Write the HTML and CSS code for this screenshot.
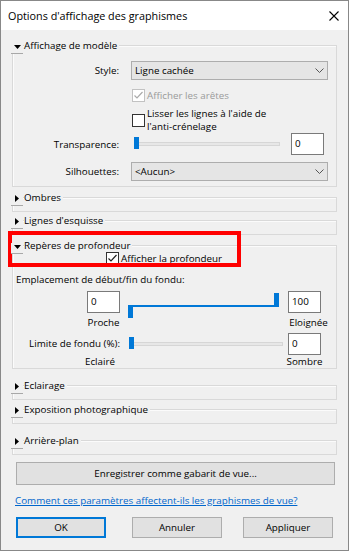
FILE: index.html
```html
<!DOCTYPE html>
<html lang="fr">
<head>
<meta charset="utf-8">
<title>Options d'affichage des graphismes</title>
<link rel="stylesheet" href="styles.css">
</head>
<body>
<div class="window">
  <div class="titlebar">
    <span class="title">Options d'affichage des graphismes</span>
    <svg class="close" width="10" height="10" viewBox="0 0 10 10"><path d="M0.5 0.5L9.5 9.5M9.5 0.5L0.5 9.5" stroke="#000" stroke-width="1.1" fill="none"/></svg>
  </div>
  <div class="content">
    <section class="group g1">
      <div class="head"><span class="tog down"><svg width="7" height="4" viewBox="0 0 7 4"><polygon points="0,0 7,0 3.5,4" fill="#000"/></svg></span><span class="gl">Affichage de modèle</span></div>
      <div class="frame model">
        <div class="mrow r1"><span class="lbl">Style:</span><div class="ctl select"><span>Ligne cachée</span><svg width="9" height="5" viewBox="0 0 9 5"><path d="M0.5 0.5L4.5 4.5L8.5 0.5" stroke="#555" fill="none"/></svg></div></div>
        <div class="mrow r2"><span class="lbl"></span><div class="ctl"><span class="chk disabled"><span class="box"><svg width="11" height="11" viewBox="0 0 11 11"><path d="M1.5 5.5L4 8L9.5 2" stroke="#aaa" stroke-width="1.2" fill="none"/></svg></span>Afficher les arêtes</span></div></div>
        <div class="mrow r3"><span class="lbl"></span><div class="ctl"><span class="chk"><span class="box"></span><span class="two">Lisser les lignes à l'aide de<br>l'anti-crénelage</span></span></div></div>
        <div class="mrow r4"><span class="lbl">Transparence:</span><div class="ctl tr"><svg class="slider" width="152" height="22" viewBox="0 0 152 22"><rect x="5.5" y="9.5" width="143" height="3" fill="#e7e7e7" stroke="#d6d6d6"/><rect x="3" y="4" width="5" height="12" fill="#0078d7"/></svg><span class="num">0</span></div></div>
        <div class="mrow r5"><span class="lbl">Silhouettes:</span><div class="ctl select"><span>&lt;Aucun&gt;</span><svg width="9" height="5" viewBox="0 0 9 5"><path d="M0.5 0.5L4.5 4.5L8.5 0.5" stroke="#555" fill="none"/></svg></div></div>
      </div>
    </section>

    <section class="group g2">
      <div class="head"><span class="tog right"><svg width="4" height="7" viewBox="0 0 4 7"><polygon points="0,0 4,3.5 0,7" fill="#000"/></svg></span><span class="gl">Ombres</span></div>
      <div class="frame empty"></div>
    </section>

    <section class="group g3">
      <div class="head"><span class="tog right"><svg width="4" height="7" viewBox="0 0 4 7"><polygon points="0,0 4,3.5 0,7" fill="#000"/></svg></span><span class="gl">Lignes d'esquisse</span></div>
      <div class="frame empty"></div>
    </section>

    <section class="group g4">
      <div class="head"><span class="tog down"><svg width="7" height="4" viewBox="0 0 7 4"><polygon points="0,0 7,0 3.5,4" fill="#000"/></svg></span><span class="gl">Repères de profondeur</span></div>
      <div class="frame depthframe">
        <div class="chkrow"><span class="chk"><span class="box"><svg width="11" height="11" viewBox="0 0 11 11"><path d="M1.5 5.5L4 8L9.5 2" stroke="#222" stroke-width="1.2" fill="none"/></svg></span>Afficher la profondeur</span></div>
        <div class="emp">Emplacement de début/fin du fondu:</div>
        <div class="depth">
          <span class="num c2 d1">0</span>
          <svg class="slider c3 d1" width="152" height="22" viewBox="0 0 152 22"><rect x="3" y="14" width="145" height="2" fill="#0078d7"/><rect x="0" y="14" width="5" height="13" fill="#0078d7"/><rect x="146" y="2" width="5" height="14" fill="#0078d7"/></svg>
          <span class="num c4 d1">100</span>
          <span class="cap c2 d2">Proche</span>
          <span class="cap c4 d2 shift">Eloignée</span>
          <span class="limlbl d3">Limite de fondu (%):</span>
          <svg class="slider c3 d3" width="152" height="22" viewBox="0 0 152 22"><rect x="3.5" y="9.5" width="151" height="3" fill="#e7e7e7" stroke="#d6d6d6"/><rect x="1" y="4" width="5" height="12" fill="#0078d7"/></svg>
          <span class="num c4 d3">0</span>
          <span class="cap small c2 d4 lshift">Eclairé</span>
          <span class="cap small c4 d4">Sombre</span>
        </div>
      </div>
    </section>

    <section class="group g5">
      <div class="head"><span class="tog right"><svg width="4" height="7" viewBox="0 0 4 7"><polygon points="0,0 4,3.5 0,7" fill="#000"/></svg></span><span class="gl">Eclairage</span></div>
      <div class="frame empty"></div>
    </section>

    <section class="group g6">
      <div class="head"><span class="tog right"><svg width="4" height="7" viewBox="0 0 4 7"><polygon points="0,0 4,3.5 0,7" fill="#000"/></svg></span><span class="gl">Exposition photographique</span></div>
      <div class="frame empty"></div>
    </section>

    <section class="group g7">
      <div class="head"><span class="tog right"><svg width="4" height="7" viewBox="0 0 4 7"><polygon points="0,0 4,3.5 0,7" fill="#000"/></svg></span><span class="gl">Arrière-plan</span></div>
      <div class="frame empty"></div>
    </section>

    <div class="btn save">Enregistrer comme gabarit de vue...</div>
    <a class="link" href="#">Comment ces paramètres affectent-ils les graphismes de vue?</a>
    <div class="buttons">
      <div class="btn ok">OK</div>
      <div class="btn cancel">Annuler</div>
      <div class="btn apply">Appliquer</div>
    </div>
  </div>
  <div class="annot"></div>
</div>
</body>
</html>
```

FILE: styles.css
```css
html, body {
  margin: 0;
  padding: 0;
  background: #fff;
}
body {
  font-family: "Open Sans", "Noto Sans", sans-serif;
  font-size: 9.8px;
  color: #000;
}
.window {
  position: relative;
  width: 349px;
  height: 551px;
  box-sizing: border-box;
  border: 1px solid #888;
  display: flex;
  flex-direction: column;
  background: #f0f0f0;
}
.titlebar {
  flex: none;
  height: 29px;
  background: #fff;
  display: flex;
  align-items: center;
  justify-content: space-between;
  padding: 0 9px 0 7px;
  font-size: 10.8px;
}
.close { display: block; }
.content {
  flex: 1;
  padding: 0 11px;
  display: flex;
  flex-direction: column;
}
.head {
  position: relative;
  z-index: 1;
  height: 16px;
  display: flex;
  align-items: center;
}
.tog {
  flex: none;
  width: 12px;
  height: 10px;
  margin-left: -1px;
  align-self: flex-end;
  margin-bottom: -1px;
  border-bottom: 1px solid #a8a8a8;
  background: #f0f0f0;
  display: flex;
  justify-content: center;
}
.tog svg { display: block; }
.tog.down { padding-top: 2px; height: 8px; }
.tog.right { padding-top: 0; }
.gl {
  margin-left: 1px;
  margin-top: 1px;
  padding-right: 2px;
  line-height: 12px;
  background: #f0f0f0;
  white-space: nowrap;
}
.frame {
  margin-top: -8px;
  border: 1px solid #d9d9d9;
  box-shadow: inset 1px 1px 0 #fbfbfb;
}
.frame.empty {
  height: 15px;
  box-sizing: border-box;
}
.g1 { margin-top: 7px; }
.g2 { margin-top: 2px; }
.g3 { margin-top: 0; }
.g4 { margin-top: 2px; }
.g5 { margin-top: 8px; }
.g6 { margin-top: 1px; }
.g7 { margin-top: 8px; }

/* model display group */
.model {
  padding: 15px 8px 5px 0;
  display: flex;
  flex-direction: column;
}
.mrow {
  display: flex;
  align-items: center;
  gap: 12px;
}
.mrow .lbl {
  flex: none;
  width: 106px;
  text-align: right;
  white-space: nowrap;
}
.mrow .ctl { flex: 1; min-width: 0; }
.r1, .r5 { height: 19px; }
.r2 { margin-top: 9px; height: 13px; }
.r3 { margin-top: 5px; height: 26px; }
.r4 { height: 22px; }
.r5 { margin-top: 7px; }
.select {
  height: 19px;
  box-sizing: border-box;
  border: 1px solid #adadad;
  background: #e5e5e5;
  display: flex;
  align-items: center;
  justify-content: space-between;
  padding: 0 3px 0 3px;
  white-space: nowrap;
}
.select svg { display: block; }
.chk {
  display: flex;
  align-items: center;
  margin-left: 1px;
  white-space: nowrap;
  line-height: 13px;
}
.box {
  flex: none;
  width: 13px;
  height: 13px;
  box-sizing: border-box;
  border: 1px solid #333;
  background: #fff;
  margin-right: 2px;
}
.box svg { display: block; }
.chk.disabled { color: #9a9a9a; }
.chk.disabled .box { border-color: #c2c2c2; }
.two { line-height: 13px; }
.tr {
  display: flex;
  align-items: center;
}
.slider { display: block; flex: none; overflow: visible; }
.num {
  flex: none;
  box-sizing: border-box;
  width: 33px;
  height: 22px;
  border: 1px solid #7a7a7a;
  background: #fff;
  padding-left: 3px;
  line-height: 20px;
}
.tr .num { margin-left: 8px; }

/* depth group */
.depthframe { padding-top: 6px; }
.chkrow { margin-left: 92px; height: 13px; display: flex; }
.emp {
  margin: 8px 0 0 3px;
  line-height: 14px;
  white-space: nowrap;
}
.depth {
  margin-top: 4px;
  display: grid;
  justify-content: start;
  grid-template-columns: 66px 33px 152px 33px;
  grid-template-rows: 22px 17px 25px 13px;
  column-gap: 8px;
}
.c2 { grid-column: 2; }
.c3 { grid-column: 3; }
.c4 { grid-column: 4; }
.d1 { grid-row: 1; }
.d2 { grid-row: 2; }
.d3 { grid-row: 3; align-self: end; }
.d4 { grid-row: 4; }
.cap {
  align-self: end;
  justify-self: center;
  white-space: nowrap;
  line-height: 14px;
}
.cap.small { line-height: 12px; }
.cap.shift { margin-left: 8px; }
.cap.lshift { margin-right: 7px; }
.limlbl {
  grid-column: 1 / 3;
  text-align: right;
  line-height: 22px;
  white-space: nowrap;
}

/* bottom */
.btn {
  box-sizing: border-box;
  border: 1px solid #adadad;
  background: #e1e1e1;
  text-align: center;
  white-space: nowrap;
}
.save {
  margin: 7px 2px 0 4px;
  height: 23px;
  line-height: 21px;
}
.link {
  margin: 9px 0 0 3px;
  line-height: 14px;
  color: #0066cc;
  text-decoration: underline;
  white-space: nowrap;
}
.buttons {
  margin-top: 9px;
  padding-left: 4px;
  display: flex;
}
.buttons .btn {
  width: 90px;
  height: 21px;
  line-height: 19px;
}
.ok {
  border-color: #0078d7;
  box-shadow: inset 0 0 0 1px #0078d7;
}
.cancel { margin-left: 26px; }
.apply { margin-left: 21px; }

.annot {
  position: absolute;
  left: 7px;
  top: 230px;
  width: 233px;
  height: 36px;
  box-sizing: border-box;
  border: 4px solid #ff0000;
}
```
